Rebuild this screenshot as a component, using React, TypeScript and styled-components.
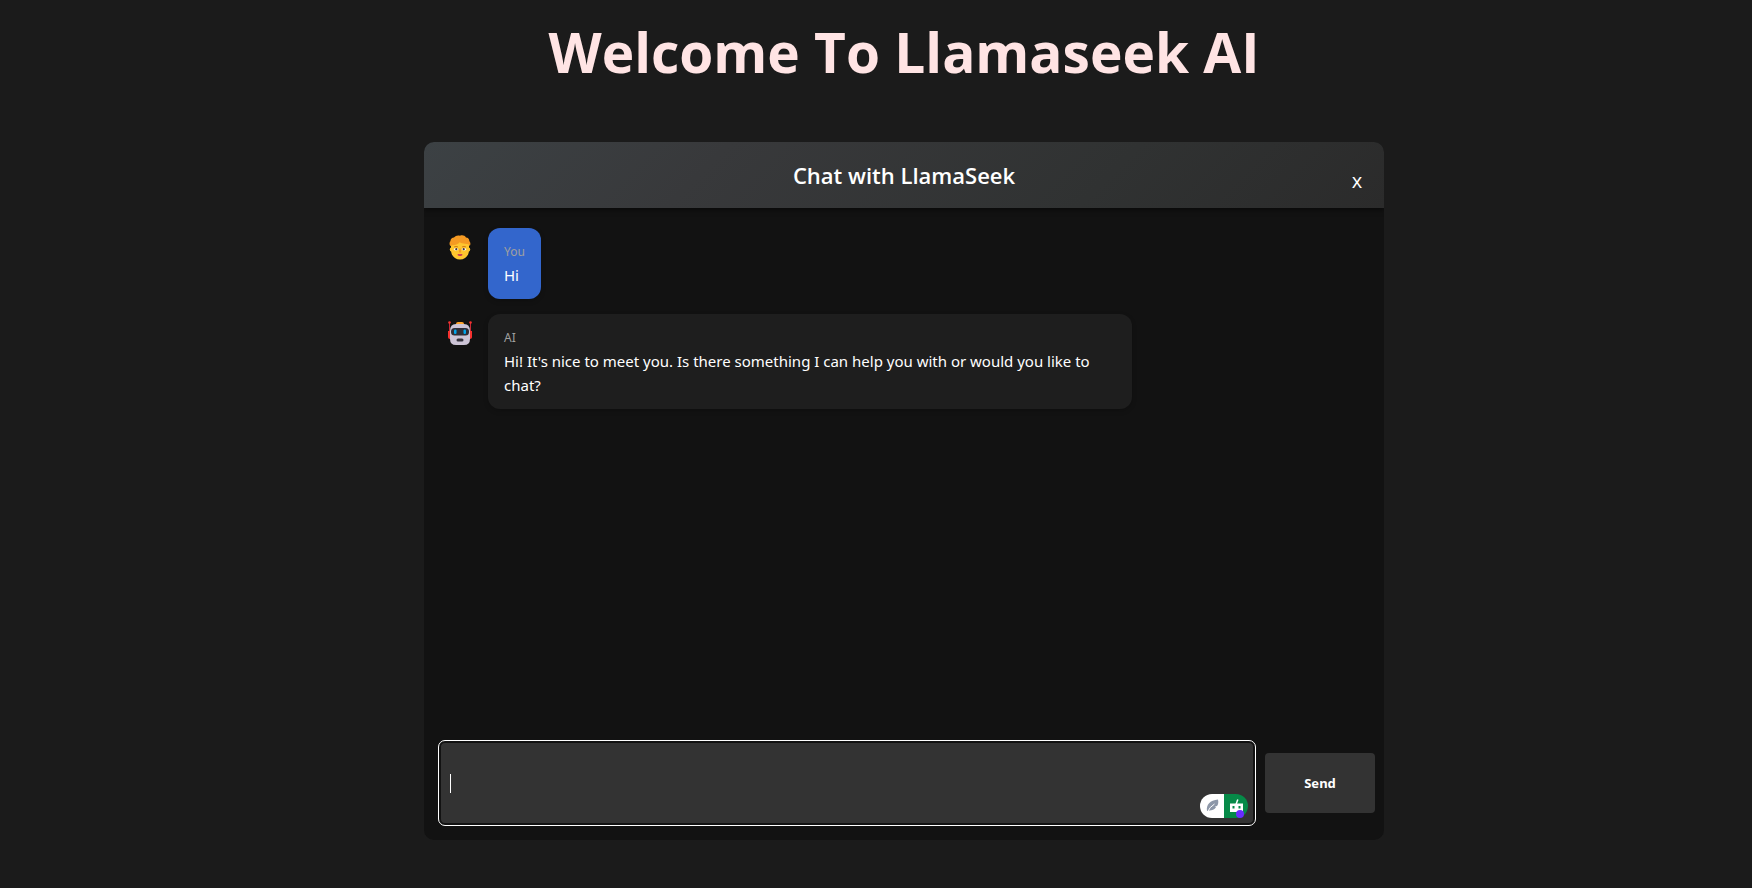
import React from "react";
import styled, { createGlobalStyle } from "styled-components";

const GlobalStyle = createGlobalStyle`
  * { box-sizing: border-box; }
  body {
    margin: 0;
    background: #1b1b1b;
    color: #ffffff;
    font-family: "Segoe UI", "Noto Sans", "Open Sans", sans-serif;
  }
`;

const Page = styled.main`
  display: flex;
  flex-direction: column;
  align-items: center;
  min-height: 100vh;
  padding: 16px 0 48px 56px;
`;

const Title = styled.h1`
  margin: 0;
  font-family: "Trebuchet MS", "Open Sans", sans-serif;
  font-size: 55px;
  line-height: 72px;
  font-weight: 700;
  color: #ffe4e4;
`;

const Card = styled.section`
  display: flex;
  flex-direction: column;
  width: 100%;
  max-width: 960px;
  margin-top: 54px;
  border-radius: 10px;
  background: #121212;
  overflow: hidden;
`;

const CardHeader = styled.header`
  display: grid;
  grid-template-columns: 40px 1fr 40px;
  align-items: center;
  height: 66px;
  padding: 0 7px;
  background: linear-gradient(135deg, #3c4144, #38393b 30%, #303232 70%, #2b2b2b);
  box-shadow: 0 2px 5px rgba(0, 0, 0, 0.5);
`;

const CardTitle = styled.h2`
  grid-column: 2;
  margin: 0;
  text-align: center;
  font-family: "Segoe UI", "Open Sans", sans-serif;
  font-size: 22px;
  line-height: 32px;
  font-weight: 600;
`;

const CloseButton = styled.button`
  padding: 12px 0 0;
  border: 0;
  background: none;
  color: inherit;
  font: 500 20px/24px "Segoe UI", "Open Sans", sans-serif;
  cursor: pointer;
`;

const Messages = styled.div`
  display: flex;
  flex-direction: column;
  gap: 15px;
  min-height: 518px;
  padding: 20px 24px;
`;

const MessageRow = styled.article`
  display: flex;
  align-items: flex-start;
  gap: 16px;
`;

const Avatar = styled.svg`
  flex: none;
  width: 24px;
  height: 25px;
  margin-top: 7px;
`;

const Bubble = styled.div<{ $own?: boolean }>`
  max-width: 644px;
  padding: 12px 16px;
  border-radius: 12px;
  background: ${(p) => (p.$own ? "#3366cc" : "#1e1e1e")};
  box-shadow: 0 2px 5px rgba(0, 0, 0, 0.2);
`;

const Sender = styled.div`
  padding-top: 1px;
  font-size: 12px;
  line-height: 22px;
  color: #a0a0a0;
`;

const Text = styled.p`
  margin: 0;
  font-size: 15px;
  line-height: 24px;
`;

const Composer = styled.form`
  display: flex;
  align-items: center;
  gap: 12px;
  padding: 17px 9px 17px 17px;
`;

const InputWrap = styled.div`
  position: relative;
  flex: 1;
  display: flex;
`;

const Input = styled.textarea`
  flex: 1;
  height: 80px;
  padding: 28px 8px;
  border: 0;
  border-radius: 4px;
  outline: 1px solid #ffffff;
  outline-offset: 2px;
  background: #333333;
  color: #ffffff;
  font: 15px/24px "Segoe UI", "Noto Sans", sans-serif;
  resize: none;
`;

const Caret = styled.span`
  position: absolute;
  left: 9px;
  top: 31px;
  width: 1px;
  height: 19px;
  background: #ffffff;
`;

const Assistant = styled.svg`
  position: absolute;
  right: 5px;
  bottom: 5px;
  width: 48px;
  height: 24px;
`;

const SendButton = styled.button`
  width: 110px;
  height: 60px;
  border: 0;
  border-radius: 4px;
  background: #333333;
  color: #ffffff;
  font: 700 13px/20px "Segoe UI", "Noto Sans", sans-serif;
  cursor: pointer;
`;

const PersonAvatar = () => (
  <Avatar viewBox="0 0 24 25" aria-hidden="true">
    <path d="M3 9c0-5 4-7 9-7s9 2 9 7v6c0 6-4 9.500-9 9.500S3 21 3 15z" fill="#ffc62e" />
    <ellipse cx="3.200" cy="14.500" rx="1.400" ry="2" fill="#ffc62e" />
    <ellipse cx="20.800" cy="14.500" rx="1.400" ry="2" fill="#ffc62e" />
    <path d="M2.300 11C1 9 1.500 7 2.500 6 2.300 4 4 2.500 6 2.500 7.500.5 10 0 12 .8 14-.2 17 .4 18 2.500c2 0 3.400 1.500 3.300 3.500 1.400 1.500 1.400 3.500.4 5l-1.200-1.800-6.500-.9c-1.500 0-2-1.300-2-1.300-2 2.400-5 3.300-7.500 3.200z" fill="#f59a23" />
    <path d="M6 12q2-1.300 4 0M14 12q2-1.300 4 0" stroke="#d67d17" strokeWidth="1" fill="none" />
    <ellipse cx="8" cy="14.200" rx="2" ry="1.200" fill="#fff" />
    <ellipse cx="16" cy="14.200" rx="2" ry="1.200" fill="#fff" />
    <circle cx="8.300" cy="14.200" r="1.100" fill="#4a3431" />
    <circle cx="15.700" cy="14.200" r="1.100" fill="#4a3431" />
    <path d="M10.800 17.500h2.400l-.5-4h-1.400z" fill="#f59a23" />
    <path d="M9.800 19.800q2.200 1.200 4.400 0z" fill="#c2265c" stroke="#c2265c" strokeWidth=".9" />
  </Avatar>
);

const RobotAvatar = () => (
  <Avatar viewBox="0 0 24 25" aria-hidden="true">
    <path d="M1.500 1v12M22.500 1v12" stroke="#c92a35" strokeWidth="1" />
    <circle cx="1.500" cy="1.500" r="1.300" fill="#f8312f" />
    <circle cx="22.500" cy="1.500" r="1.300" fill="#f8312f" />
    <path d="M0 10h2v8C.8 18 0 17 0 16zM24 10h-2v8c1.200 0 2-1 2-2z" fill="#f8312f" />
    <path d="M8 3q0-2 2-2h4q2 0 2 2v2H8z" fill="#ffa42e" />
    <path d="M2 10q0-7 6-7h8q6 0 6 7v8q0 6-6 6H8q-6 0-6-6z" fill="#cdc4d6" />
    <rect x="3" y="7" width="18" height="7.500" rx="3.500" fill="#2f2e38" />
    <rect x="6" y="8.500" width="2.500" height="4.500" rx="1" fill="#00a6ed" />
    <rect x="15.500" y="8.500" width="2.500" height="4.500" rx="1" fill="#00a6ed" />
    <rect x="8.500" y="17.500" width="7" height="3" rx="1.500" fill="#34313c" />
  </Avatar>
);

export default function App() {
  return (
    <Page>
      <GlobalStyle />
      <Title>Welcome To Llamaseek AI</Title>
      <Card>
        <CardHeader>
          <CardTitle>Chat with LlamaSeek</CardTitle>
          <CloseButton type="button" aria-label="Close chat">x</CloseButton>
        </CardHeader>
        <Messages>
          <MessageRow>
            <PersonAvatar />
            <Bubble $own>
              <Sender>You</Sender>
              <Text>Hi</Text>
            </Bubble>
          </MessageRow>
          <MessageRow>
            <RobotAvatar />
            <Bubble>
              <Sender>AI</Sender>
              <Text>
                Hi! It's nice to meet you. Is there something I can help you with or would you like to chat?
              </Text>
            </Bubble>
          </MessageRow>
        </Messages>
        <Composer onSubmit={(e) => e.preventDefault()}>
          <InputWrap>
            <Input aria-label="Message" />
            <Caret />
            <Assistant viewBox="0 0 48 24" aria-hidden="true">
              <path d="M24 0H12a12 12 0 0 0 0 24h12z" fill="#ffffff" />
              <path d="M24 0h12a12 12 0 0 1 0 24H24z" fill="#068a48" />
              <path d="M7 17c-1-6 3-11 11-11.500.8 3 0 5.500-1 6.500l-2 .5 1 .8c-1.500 2.200-4 3.200-6.500 3.200z" fill="#8d97a8" />
              <path d="M7.500 18q2-5 7-8" stroke="#ffffff" strokeWidth="1" fill="none" />
              <path d="M36 10.500l1.800-5" stroke="#ffffff" strokeWidth="1.500" />
              <path d="M30 9.500h13V18H30z" fill="#ffffff" />
              <path d="M32.500 12h2v2.500h-2zM38.500 12h2v2.500h-2z" fill="#068a48" />
              <circle cx="40" cy="20" r="4" fill="#6a2cff" />
            </Assistant>
          </InputWrap>
          <SendButton type="submit">Send</SendButton>
        </Composer>
      </Card>
    </Page>
  );
}
